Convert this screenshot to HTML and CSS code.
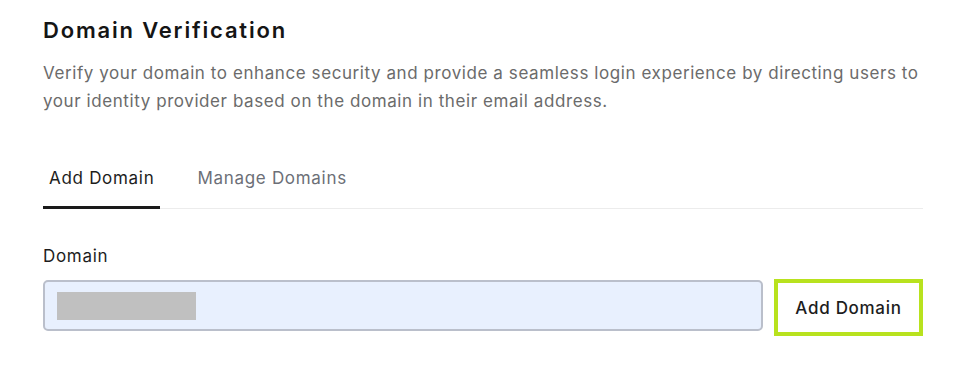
FILE: index.html
```html
<!DOCTYPE html>
<html lang="en">
<head>
<meta charset="utf-8">
<link rel="stylesheet" href="styles.css">
</head>
<body>
<main class="panel">
  <h1 class="title">Domain Verification</h1>
  <p class="desc">Verify your domain to enhance security and provide a seamless login experience by directing users to your identity provider based on the domain in their email address.</p>
  <nav class="tabs">
    <span class="tab active">Add Domain</span>
    <span class="tab">Manage Domains</span>
  </nav>
  <div class="field">
    <label class="label">Domain</label>
    <div class="row">
      <div class="input"><span class="redact"></span></div>
      <button class="btn">Add Domain</button>
    </div>
  </div>
</main>
</body>
</html>
```

FILE: styles.css
```css
* { box-sizing: border-box; }
html, body { margin: 0; background: #fff; }
body {
  font-family: Inter, "Noto Sans", sans-serif;
  color: #1b1b1b;
}
.panel {
  width: 880px;
  margin-left: 43px;
  padding-top: 14px;
}
.title {
  margin: 0;
  font-size: 22px;
  font-weight: 600;
  line-height: 32px;
  letter-spacing: 1.82px;
  color: #151515;
}
.desc {
  margin: 13px 0 0;
  font-size: 17px;
  line-height: 28px;
  letter-spacing: 0.58px;
  color: #6b6b6b;
}
.tabs {
  display: flex;
  margin-top: 47px;
  border-bottom: 1px solid #ececec;
}
.tab {
  font-size: 17px;
  line-height: 22px;
  letter-spacing: 0.7px;
  padding: 5px 6px 17px;
  color: #6c6f77;
  margin-right: 31px;
}
.tab.active {
  color: #1d1d1d;
  border-bottom: 3px solid #1a1a1a;
  margin-bottom: -1px;
}
.field { margin-top: 36px; }
.label {
  display: block;
  font-size: 17px;
  line-height: 22px;
  letter-spacing: 0.7px;
  color: #1d1d1d;
}
.row {
  display: flex;
  align-items: flex-start;
  gap: 11px;
  margin-top: 12px;
}
.input {
  flex: 1;
  height: 51px;
  margin-top: 1px;
  background: #e8f0fe;
  border: 2px solid #babfcb;
  border-radius: 5px;
  display: flex;
  align-items: center;
  padding-left: 12px;
}
.redact {
  width: 139px;
  height: 28px;
  background: #c0c0c0;
}
.btn {
  width: 149px;
  height: 57px;
  background: #fff;
  border: 4px solid #b8e21e;
  font-family: inherit;
  font-size: 17px;
  letter-spacing: 0.7px;
  font-weight: 500;
  color: #1d1d1d;
  padding: 0;
}
```
